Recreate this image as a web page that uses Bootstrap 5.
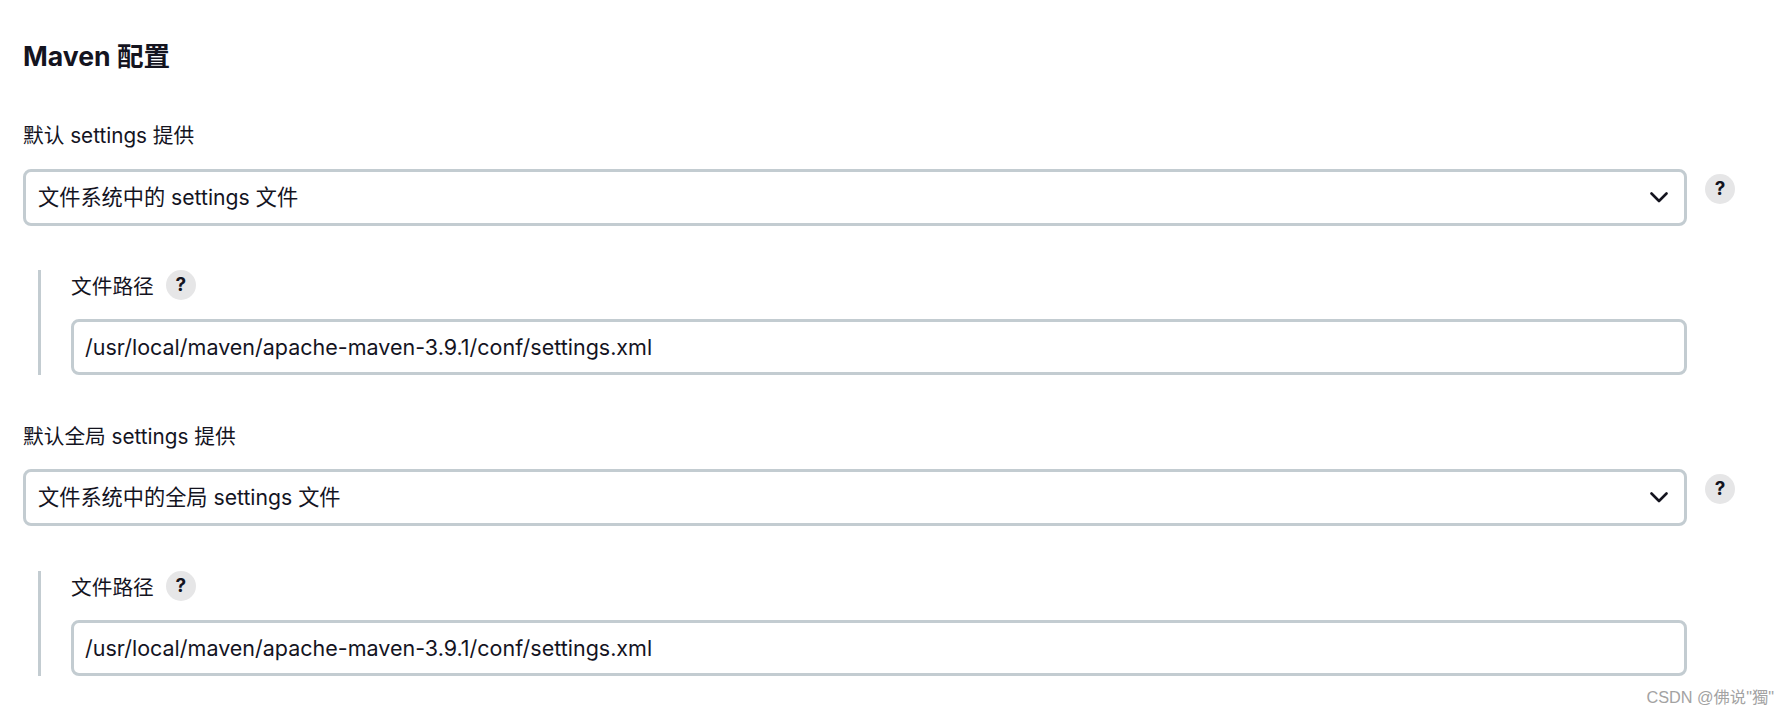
<!DOCTYPE html>
<html lang="zh-CN">
<head>
<meta charset="utf-8">
<title>Maven 配置</title>
<link href="https://cdn.jsdelivr.net/npm/bootstrap@5.3.0/dist/css/bootstrap.min.css" rel="stylesheet">
<style>
html, body { height: 715px; overflow: hidden; }
body { background: #fff; color: #14141f; font-family: Inter, "Noto Sans CJK SC", sans-serif; font-size: 20.7px; line-height: 1.5; position: relative; }
.page-wrap { padding: 40px 0 0 23px; width: 1740px; }
.sect-title { font-size: 26.6px; font-weight: 700; line-height: 32px; margin: 0 0 50px 0; }
.field-label { font-size: 20.7px; line-height: 28px; margin: 0 0 19px 0; }
.field-row { gap: 18px; }
.jselect, .jinput { background-color: #fff; border: 3px solid #c3ccd1; border-radius: 8px; color: #14141f; font-family: inherit; font-size: 21.5px; height: 56px; line-height: 1.5; padding: 0 11px; box-shadow: none; }
.jselect { width: 1664px; height: 57px; font-size: 21.2px; padding-left: 12px; padding-right: 40px; background-image: url("data:image/svg+xml,%3csvg xmlns='http://www.w3.org/2000/svg' viewBox='0 0 18 11'%3e%3cpath fill='none' stroke='%2314141f' stroke-width='2.6' stroke-linecap='round' stroke-linejoin='round' d='M1.5 1.5 9 9l7.5-7.5'/%3e%3c/svg%3e"); background-size: 18px 11px; background-position: right 16px center; }
.jinput { width: 100%; }
.help-dot { width: 30px; height: 30px; flex: 0 0 30px; border-radius: 50%; background: #e6e6e7; color: #14141f; font-family: Inter, sans-serif; font-size: 19px; font-weight: 700; line-height: 1; padding: 0 0 2px; border: 0; }
.top-dot { margin-top: 5px; }
.nested { margin: 44px 0 0 15px; width: 1649px; border-left: 3px solid #c3ccd1; padding-left: 30px; }
.nested .field-label { margin: 2px 0 -2px; line-height: 30px; }
.nested-label { gap: 12px; margin-bottom: 19px; }
.block-gap { margin-top: 48px; margin-bottom: 18px; }
.nested-late { margin-top: 45px; }
.wm { position: absolute; right: 14px; bottom: 8px; font-size: 16.3px; line-height: 20px; color: #a3a3a3; font-family: "Liberation Sans", "Noto Sans CJK SC", sans-serif; }
</style>
</head>
<body>
<div class="page-wrap">
  <h2 class="sect-title">Maven 配置</h2>

  <p class="field-label">默认 settings 提供</p>
  <div class="d-flex align-items-start field-row">
    <select class="form-select jselect"><option>文件系统中的 settings 文件</option></select>
    <button type="button" class="help-dot d-flex align-items-center justify-content-center top-dot">?</button>
  </div>
  <div class="nested">
    <div class="d-flex align-items-center nested-label">
      <p class="field-label">文件路径</p>
      <button type="button" class="help-dot d-flex align-items-center justify-content-center">?</button>
    </div>
    <input class="form-control jinput" type="text" value="/usr/local/maven/apache-maven-3.9.1/conf/settings.xml">
  </div>

  <p class="field-label block-gap">默认全局 settings 提供</p>
  <div class="d-flex align-items-start field-row">
    <select class="form-select jselect"><option>文件系统中的全局 settings 文件</option></select>
    <button type="button" class="help-dot d-flex align-items-center justify-content-center top-dot">?</button>
  </div>
  <div class="nested nested-late">
    <div class="d-flex align-items-center nested-label">
      <p class="field-label">文件路径</p>
      <button type="button" class="help-dot d-flex align-items-center justify-content-center">?</button>
    </div>
    <input class="form-control jinput" type="text" value="/usr/local/maven/apache-maven-3.9.1/conf/settings.xml">
  </div>
</div>
<div class="wm">CSDN @佛说"獨"</div>
<script src="https://cdn.jsdelivr.net/npm/bootstrap@5.3.0/dist/js/bootstrap.bundle.min.js"></script>
</body>
</html>
